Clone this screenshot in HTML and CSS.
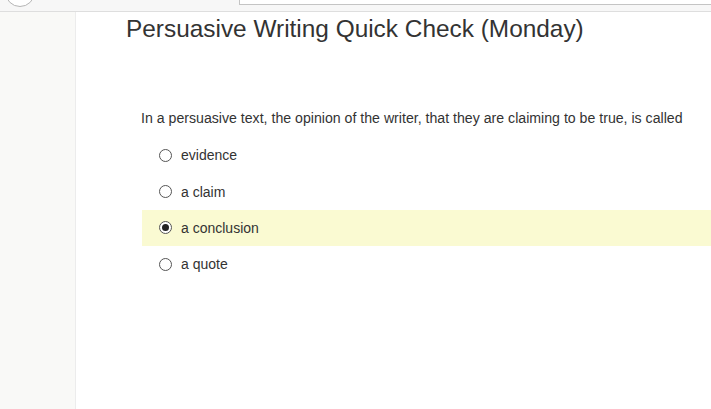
FILE: index.html
```html
<!DOCTYPE html>
<html lang="en">
<head>
<meta charset="utf-8">
<title>Persuasive Writing Quick Check (Monday)</title>
<link rel="stylesheet" href="styles.css">
</head>
<body>
<header class="topbar">
  <div class="avatar"></div>
  <div class="search"></div>
</header>
<div class="layout">
  <aside class="sidebar"></aside>
  <main class="main">
    <h1 class="title">Persuasive Writing Quick Check (Monday)</h1>
    <section class="question">
      <p class="prompt">In a persuasive text, the opinion of the writer, that they are claiming to be true, is called</p>
      <ul class="options">
        <li class="option"><span class="radio"></span><span class="label">evidence</span></li>
        <li class="option"><span class="radio"></span><span class="label">a claim</span></li>
        <li class="option selected"><span class="radio checked"></span><span class="label">a conclusion</span></li>
        <li class="option"><span class="radio"></span><span class="label">a quote</span></li>
      </ul>
    </section>
  </main>
</div>
</body>
</html>
```
FILE: styles.css
```css
* { box-sizing: border-box; }
html, body { margin: 0; padding: 0; height: 100%; }
body {
  font-family: "Liberation Sans", Arial, sans-serif;
  color: #333;
  background: #fff;
  overflow: hidden;
}
.topbar {
  height: 12px;
  background: #f7f7f7;
  border-bottom: 1px solid #dedede;
  display: flex;
  align-items: flex-end;
  overflow: hidden;
}
.avatar {
  flex: none;
  width: 30px;
  height: 30px;
  margin-left: 5px;
  margin-bottom: 4px;
  border: 1px solid #b5b5b5;
  border-radius: 50%;
  background: #fff;
}
.search {
  flex: 1;
  height: 30px;
  margin-left: 204px;
  margin-bottom: 6px;
  border: 1px solid #c4c4c4;
  border-right: none;
  background: #fff;
}
.layout {
  display: flex;
  height: calc(100% - 12px);
}
.sidebar {
  flex: none;
  width: 76px;
  background: #f9f9f7;
  border-right: 1px solid #ececec;
}
.main {
  flex: 1;
  min-width: 0;
  padding-left: 50px;
}
.title {
  margin: 0;
  font-size: 24.4px;
  font-weight: normal;
  line-height: 34px;
  color: #333;
}
.question {
  padding-left: 15px;
  margin-top: 62px;
}
.prompt {
  margin: 0;
  font-size: 14.15px;
  line-height: 20px;
}
.options {
  list-style: none;
  margin: 9px 0 0 1px;
  padding: 0;
}
.option {
  height: 36.4px;
  display: flex;
  align-items: center;
  padding-left: 17px;
  font-size: 14px;
}
.option.selected { background: #fafad2; }
.radio {
  flex: none;
  width: 13px;
  height: 13px;
  border: 1px solid #555;
  border-radius: 50%;
  background: #fff;
  display: flex;
  align-items: center;
  justify-content: center;
}
.radio.checked::after {
  content: "";
  width: 7px;
  height: 7px;
  border-radius: 50%;
  background: #222;
}
.label { margin-left: 9px; }
```
